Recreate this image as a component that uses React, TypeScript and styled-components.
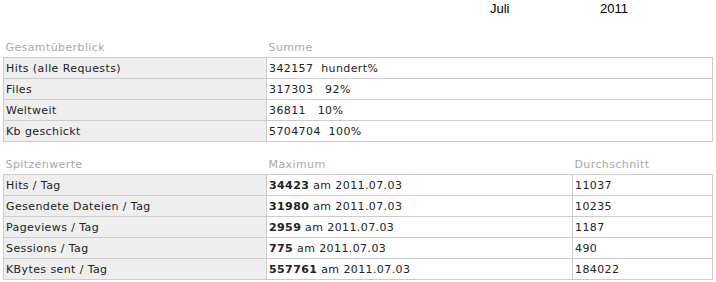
import React from "react";
import styled, { createGlobalStyle } from "styled-components";

const GlobalStyle = createGlobalStyle`
    body {
        margin: 0;
        background: #ffffff;
        font-family: "DejaVu Sans", Verdana, sans-serif;
    }
`;

type Row = { label: string; value: React.ReactNode; avg?: string };

const overview: Row[] = [
    { label: "Hits (alle Requests)", value: "342157  hundert%" },
    { label: "Files", value: "317303   92%" },
    { label: "Weltweit", value: "36811   10%" },
    { label: "Kb geschickt", value: "5704704  100%" },
];

const peaks: { label: string; max: string; avg: string }[] = [
    { label: "Hits / Tag", max: "34423", avg: "11037" },
    { label: "Gesendete Dateien / Tag", max: "31980", avg: "10235" },
    { label: "Pageviews / Tag", max: "2959", avg: "1187" },
    { label: "Sessions / Tag", max: "775", avg: "490" },
    { label: "KBytes sent / Tag", max: "557761", avg: "184022" },
];

const App = () => {
    return (
        <Page>
            <GlobalStyle />
            <Period>
                <span>Juli</span>
                <span>2011</span>
            </Period>
            <Table>
                <colgroup>
                    <col style={{ width: 263 }} />
                    <col />
                </colgroup>
                <thead>
                    <tr>
                        <Head>Gesamtüberblick</Head>
                        <Head>Summe</Head>
                    </tr>
                </thead>
                <tbody>
                    {overview.map(r => (
                        <tr key={r.label}>
                            <Label>{r.label}</Label>
                            <Cell>{r.value}</Cell>
                        </tr>
                    ))}
                </tbody>
            </Table>
            <Table theme={{ spaced: true }}>
                <colgroup>
                    <col style={{ width: 263 }} />
                    <col style={{ width: 306 }} />
                    <col />
                </colgroup>
                <thead>
                    <tr>
                        <Head>Spitzenwerte</Head>
                        <Head>Maximum</Head>
                        <Head>Durchschnitt</Head>
                    </tr>
                </thead>
                <tbody>
                    {peaks.map(r => (
                        <tr key={r.label}>
                            <Label>{r.label}</Label>
                            <Cell><b>{r.max}</b> am 2011.07.03</Cell>
                            <Cell>{r.avg}</Cell>
                        </tr>
                    ))}
                </tbody>
            </Table>
        </Page>
    );
};

const Page = styled.div`
    width: 716px;
    padding: 0 3px;
    box-sizing: border-box;
`;
const Period = styled.div`
    display: flex;
    padding: 1px 0 0 487px;
    height: 38px;
    font-family: "Liberation Sans", Arial, sans-serif;
    font-size: 13px;
    color: #000000;
    span:first-child {
        width: 110px;
    }
`;
const Table = styled.table`
    width: 710px;
    border-collapse: collapse;
    table-layout: fixed;
    margin-top: ${props => props.theme && props.theme.spaced ? "14px" : "0"};
    font-size: 11px;
    letter-spacing: 0.4px;
`;
const Head = styled.th`
    text-align: left;
    font-weight: normal;
    color: #a8a8a8;
    padding: 2px 2px 3px 2px;
`;
const Cell = styled.td`
    border: 1px solid #cccccc;
    background: #ffffff;
    color: #222222;
    height: 20px;
    padding: 0 2px;
    white-space: pre;
    b {
        font-weight: bold;
    }
`;
const Label = styled(Cell)`
    background: #eeeeee;
`;

export default App;
